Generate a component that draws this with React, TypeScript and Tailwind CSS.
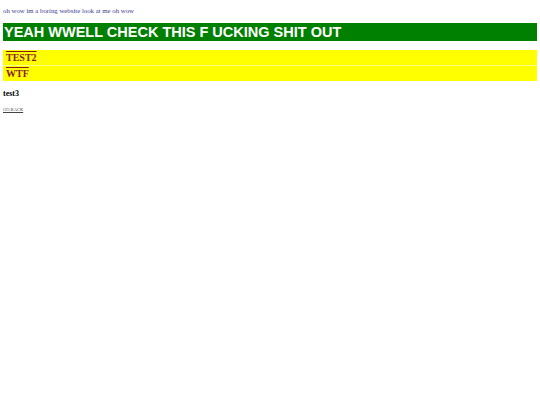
import React from 'react';

const serif = { fontFamily: '"Liberation Serif", "Times New Roman", serif' };
const heading = { fontFamily: '"Comic Sans MS", "Liberation Sans", sans-serif' };

export default function App() {
  return (
    <div className="min-h-[405px] w-[540px] bg-white px-[3px] pt-[6px]" style={serif}>
      <p className="text-[6.8px] leading-[9px] text-[#3b3b8f]">oh wow im a boring website look at me oh wow</p>

      <h1
        className="mt-[8px] bg-[#008000] px-[1px] text-[14.5px] font-bold leading-[18px] text-white"
        style={heading}
      >
        YEAH WWELL CHECK THIS F UCKING SHIT OUT
      </h1>

      <div className="mt-[9px] flex flex-col bg-[#ffff00] text-[10px] font-bold leading-[15px] text-[#8b1a1a]">
        <div className="border-b border-[#ffff80] px-[3px]">
          <span className="overline">TEST2</span>
        </div>
        <div className="px-[3px]">
          <span className="overline">WTF</span>
        </div>
      </div>

      <h3 className="mt-[8px] text-[8px] font-bold leading-[10px] text-black">test3</h3>

      <a href="#" className="mt-[8px] block text-[4.5px] leading-[6px] text-[#444] underline">
        GO BACK
      </a>
    </div>
  );
}
